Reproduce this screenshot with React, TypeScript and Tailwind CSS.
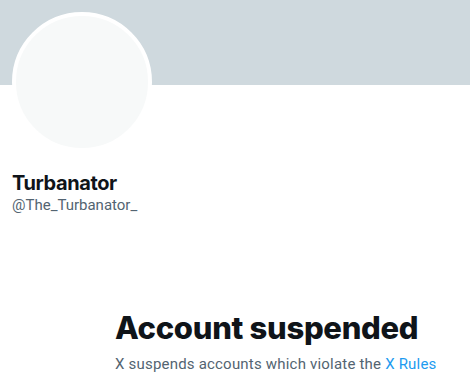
export default function App() {
  return (
    <div
      className="w-[470px] h-[392px] bg-white overflow-hidden"
      style={{ fontFamily: 'Roboto, "Noto Sans", sans-serif' }}
    >
      <div className="h-[85px] bg-[#CFD9DE]" />
      <div className="px-3">
        <div className="-mt-[73px] w-[140px] h-[140px] rounded-full border-4 border-white bg-[#F7F9F9]" />
        <div
          className="mt-[19px] text-[20px] leading-[24px] font-bold text-[#0F1419] tracking-[-0.4px]"
          style={{ fontFamily: 'Inter, sans-serif' }}
        >
          Turbanator
        </div>
        <div className="text-[15px] leading-[20px] text-[#536471]">@The_Turbanator_</div>
      </div>
      <div className="mt-[95px] pl-[115px]">
        <div
          className="text-[31px] leading-[36px] font-extrabold text-[#0F1419] tracking-[-0.3px]"
          style={{ fontFamily: 'Inter, sans-serif' }}
        >
          Account suspended
        </div>
        <div className="mt-2 text-[15px] leading-[20px] text-[#536471] tracking-[0.2px]">
          X suspends accounts which violate the <span className="text-[#1D9BF0]">X Rules</span>
        </div>
      </div>
    </div>
  );
}
